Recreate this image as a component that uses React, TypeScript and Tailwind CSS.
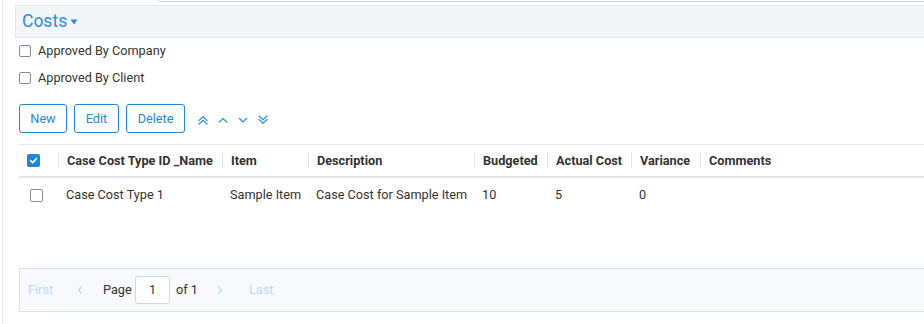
import React from "react";

const Check = ({ checked }: { checked?: boolean }) =>
  checked ? (
    <span className="flex h-[13px] w-[13px] items-center justify-center rounded-[2px] bg-[#1a8ad6]">
      <svg width="9" height="9" viewBox="0 0 10 10">
        <path d="M1.8 5.2 L4.1 7.4 L8.3 2.8" fill="none" stroke="#fff" strokeWidth="1.9" strokeLinecap="round" strokeLinejoin="round" />
      </svg>
    </span>
  ) : (
    <span className="block h-[13px] w-[13px] rounded-[2px] border border-[#8c8c8c] bg-white" />
  );

const Chev = ({ d, w = 10, h = 10 }: { d: string; w?: number; h?: number }) => (
  <svg width={w} height={h} viewBox="0 0 10 10">
    <path d={d} fill="none" stroke="#3597dc" strokeWidth="1.3" strokeLinecap="round" strokeLinejoin="round" />
  </svg>
);

const cols = [
  { label: "Case Cost Type ID _Name", w: "w-[164px]" },
  { label: "Item", w: "w-[86px]" },
  { label: "Description", w: "w-[166px]" },
  { label: "Budgeted", w: "w-[73px]" },
  { label: "Actual Cost", w: "w-[84px]" },
  { label: "Variance", w: "w-[69px]" },
  { label: "Comments", w: "flex-1" },
];
const row = ["Case Cost Type 1", "Sample Item", "Case Cost for Sample Item", "10", "5", "0", ""];

export default function App() {
  return (
    <div
      className="h-[324px] w-[924px] overflow-hidden bg-white pl-[2px] text-[12.7px] text-[#333]"
      style={{ fontFamily: "Roboto, 'Liberation Sans', sans-serif" }}
    >
      <div className="h-full border-l border-[#e3e5e8]">
        <div className="ml-[156px] h-[2px] rounded-bl-[3px] border-b border-l border-[#d6d6d6]" />
        <div className="ml-[12px] mt-[3px] flex h-[33px] items-center border border-r-0 border-[#e4e7ec] bg-[#f4f5f9] pl-[6px]">
          <span className="text-[17.5px] leading-none text-[#2a8fd8]">Costs</span>
          <svg className="ml-[3px] mt-[1px]" width="8" height="6" viewBox="0 0 8 6">
            <path d="M0.5 0.5 L7.5 0.5 L4 5.5 Z" fill="#2a8fd8" />
          </svg>
        </div>
        <div className="ml-[16px] mt-[6px] flex h-[14px] items-center gap-[7px]">
          <span className="block h-[12px] w-[12px] rounded-[2px] border border-[#8c8c8c]" />
          <span>Approved By Company</span>
        </div>
        <div className="ml-[16px] mt-[13px] flex h-[14px] items-center gap-[7px]">
          <span className="block h-[12px] w-[12px] rounded-[2px] border border-[#8c8c8c]" />
          <span>Approved By Client</span>
        </div>
        <div className="ml-[16px] mt-[19px] flex h-[29px] items-center">
          <div className="flex h-[29px] w-[48px] items-center justify-center rounded-[3px] border border-[#1a8ad6] text-[#1a8ad6]">New</div>
          <div className="ml-[7px] flex h-[29px] w-[45px] items-center justify-center rounded-[3px] border border-[#1a8ad6] text-[#1a8ad6]">Edit</div>
          <div className="ml-[7px] flex h-[29px] w-[59px] items-center justify-center rounded-[3px] border border-[#1a8ad6] text-[#1a8ad6]">Delete</div>
          <div className="ml-[13px] mt-[3px] flex items-center gap-[10px]">
            <Chev d="M1 5.5 L5 1.8 L9 5.5 M1 9 L5 5.3 L9 9" />
            <Chev d="M1.5 7 L5 3.5 L8.5 7" />
            <Chev d="M1.5 3.5 L5 7 L8.5 3.5" />
            <Chev d="M1 1 L5 4.7 L9 1 M1 4.5 L5 8.2 L9 4.5" />
          </div>
        </div>
        <div className="ml-[16px] mt-[11px] border-t border-[#e2e4e8]">
          <div className="flex h-[33px] items-center border-b-2 border-[#e2e4e8] font-bold">
            <div className="flex w-[39px] items-center pl-[8px]">
              <Check checked />
            </div>
            {cols.map((c) => (
              <div key={c.label} className={`${c.w} flex items-center`}>
                <span className="h-[16px] w-px bg-[#e2e4e8]" />
                <span className="whitespace-nowrap pl-[8px]">{c.label}</span>
              </div>
            ))}
          </div>
          <div className="flex h-[34px] items-center">
            <div className="flex w-[39px] items-center pl-[11px] pt-[1px]">
              <Check />
            </div>
            {cols.map((c, i) => (
              <div key={c.label} className={`${c.w} whitespace-nowrap pl-[8px]`}>
                {row[i]}
              </div>
            ))}
          </div>
        </div>
        <div className="ml-[16px] mt-[56px] flex h-[44px] items-center border border-r-0 border-[#dcdfe4] bg-[#f7f9fc] pl-[8px]">
          <span className="w-[49px] text-[#b6dbf4]">First</span>
          <span className="flex w-[26px] items-center">
            <svg width="6" height="10" viewBox="0 0 6 10">
              <path d="M4.5 1.5 L1.5 5 L4.5 8.5" fill="none" stroke="#b6dbf4" strokeWidth="1.2" />
            </svg>
          </span>
          <span className="w-[32px]">Page</span>
          <span className="flex h-[28px] w-[35px] items-center justify-center rounded-[3px] border border-[#d4d7dc] bg-white">1</span>
          <span className="ml-[6px] w-[41px]">of 1</span>
          <span className="flex w-[32px] items-center">
            <svg width="6" height="10" viewBox="0 0 6 10">
              <path d="M1.5 1.5 L4.5 5 L1.5 8.5" fill="none" stroke="#b6dbf4" strokeWidth="1.2" />
            </svg>
          </span>
          <span className="text-[#b6dbf4]">Last</span>
        </div>
      </div>
    </div>
  );
}
